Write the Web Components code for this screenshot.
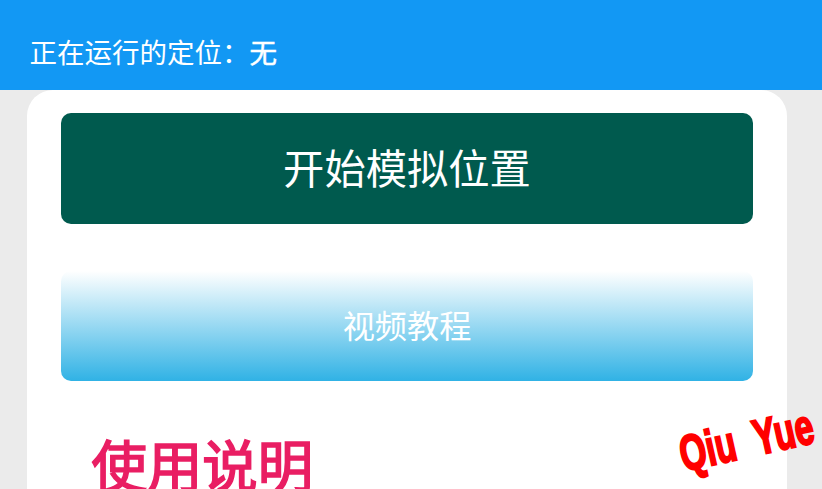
<!DOCTYPE html>
<html lang="zh"><head><meta charset="utf-8"><style>
html,body{margin:0;padding:0;height:489px;overflow:hidden;background:#ebebeb}
body{font-family:"Noto Sans CJK SC","Noto Sans",sans-serif}
</style></head><body>
<app-shell>
<status-bar>正在运行的定位：<b>无</b></status-bar>
<main-card>
<action-button variant="solid">开始模拟位置</action-button>
<action-button variant="fade">视频教程</action-button>
<section-title>使用说明</section-title>
</main-card>
<water-mark>Qiu&nbsp;&nbsp;Yue</water-mark>
</app-shell>
<script>
function def(name,css,html){customElements.define(name,class extends HTMLElement{constructor(){super();this.attachShadow({mode:"open"}).innerHTML="<style>"+css+"</style>"+(html||"<slot></slot>")}})}
def("app-shell",":host{display:flex;flex-direction:column;position:relative;width:822px;height:489px;overflow:hidden;background:#ebebeb}");
def("status-bar",":host{display:flex;align-items:flex-end;box-sizing:border-box;height:90px;padding:0 0 20px 29.5px;background:#1298f4;color:#fff;font-size:27.5px;line-height:38px;flex:none}::slotted(b){font-weight:400;-webkit-text-stroke:.5px #fff}");
def("main-card",":host{display:flex;flex-direction:column;gap:47px;box-sizing:border-box;width:760px;flex:1;margin-left:27px;padding:23px 34px 0;background:#fff;border-radius:26px 26px 0 0}");
def("action-button",":host{display:flex;align-items:center;justify-content:center;box-sizing:border-box;color:#fff;border-radius:10px;flex:none}:host([variant=solid]){height:111px;background:#005a4e;font-size:41.3px;padding-bottom:5px}:host([variant=fade]){height:110px;font-size:32.2px;background:linear-gradient(#fff,#30b2e5);padding-bottom:4px}");
def("section-title",":host{display:block;margin:0 0 0 30.5px;color:#e91e63;font-size:55.4px;line-height:70px;font-weight:400;-webkit-text-stroke:1.7px #e91e63;flex:none;height:70px}");
def("water-mark",":host{position:absolute;left:680px;top:425px;color:#f00;font:700 50px/60px 'Liberation Sans',sans-serif;white-space:nowrap;-webkit-text-stroke:2.2px #f00;transform-origin:0 50%;transform:rotate(-12.5deg) scaleX(.68)}");
</script>
</body></html>
